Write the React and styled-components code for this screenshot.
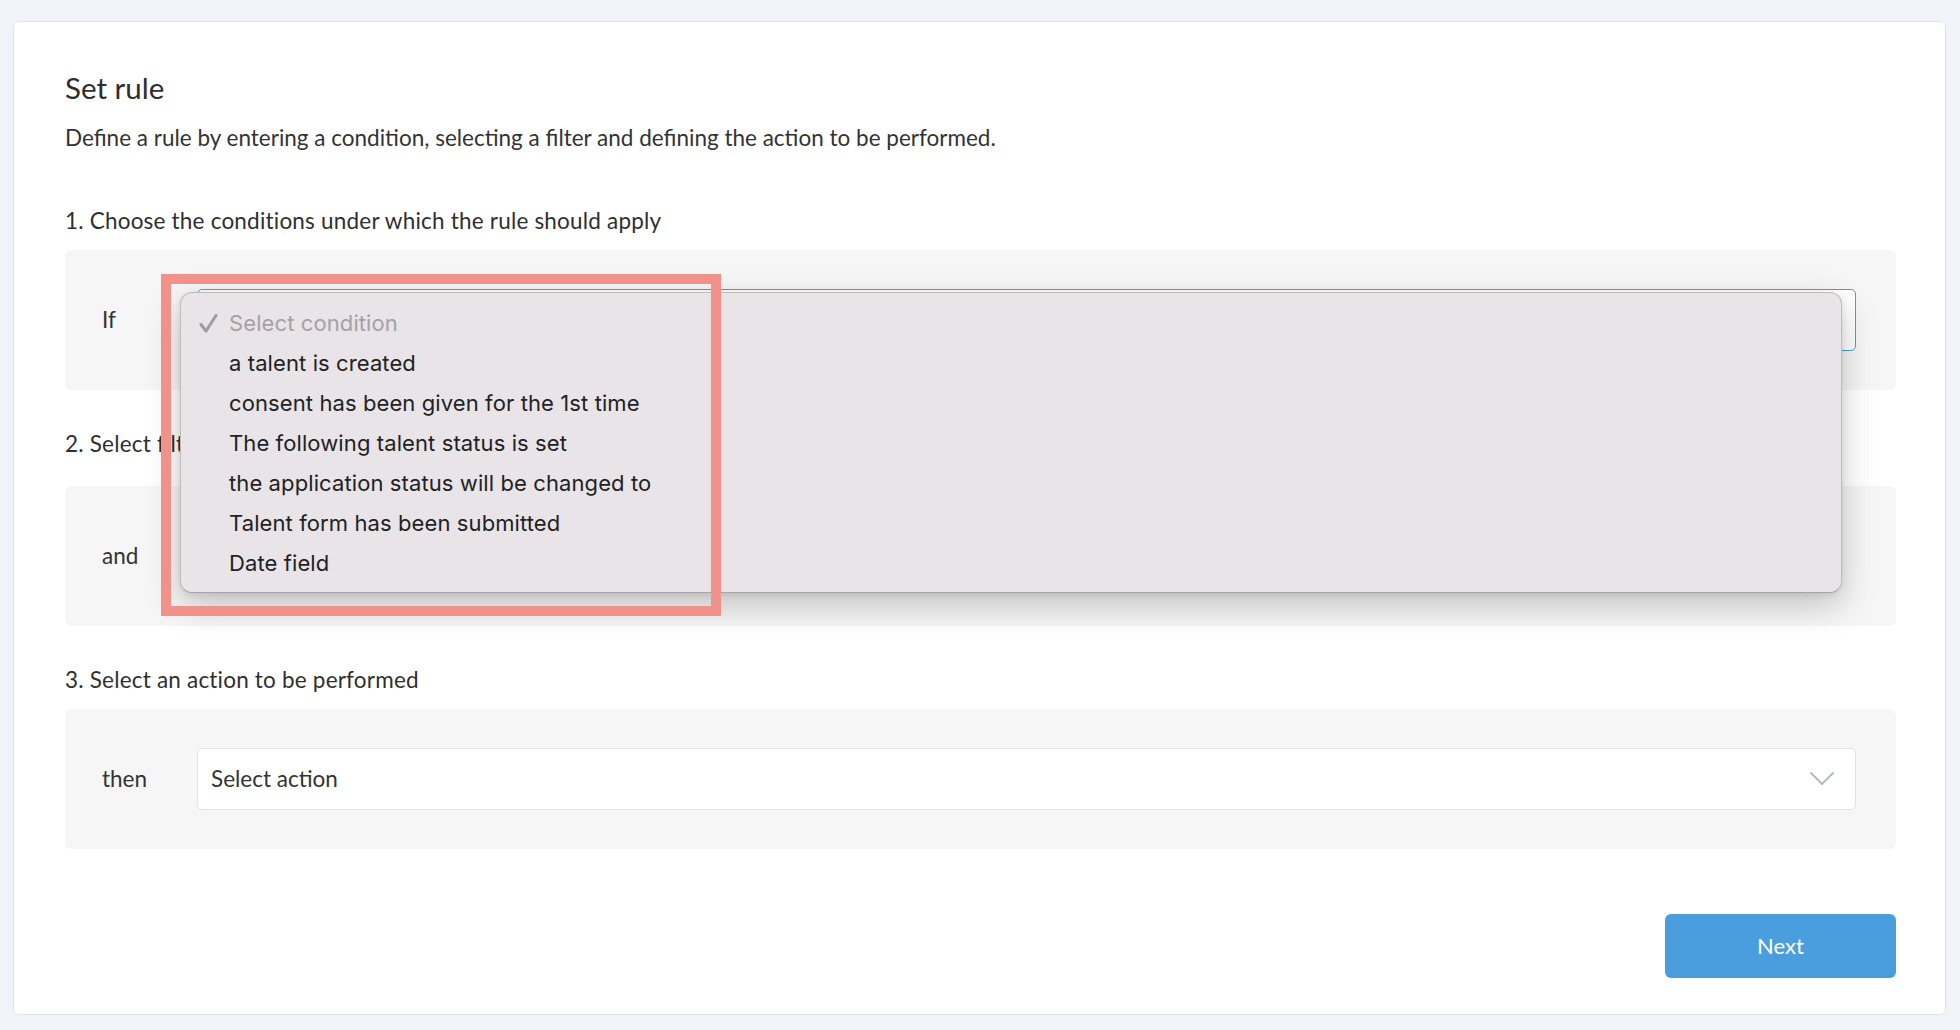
import React from "react"
import styled, { createGlobalStyle } from "styled-components"

const GlobalStyle = createGlobalStyle`
  html, body {
    margin: 0;
    background: #f0f4f9;
  }
  body {
    font-family: Lato, "Liberation Sans", sans-serif;
    color: #333;
  }
  * { box-sizing: border-box; }
`

const Page = styled.div`
  padding: 21px 14px 15px 13px;
`
const Card = styled.div`
  background: #fff;
  border: 1px solid #dfe4eb;
  border-radius: 6px;
  padding: 47.6px 49px 36px 51px;
  display: flex;
  flex-direction: column;
`
const Title = styled.h2`
  margin: 0;
  font-size: 29.5px;
  font-weight: 400;
  line-height: 36px;
  color: #2e2e2e;
`
const Intro = styled.p`
  margin: 18.2px 0 0;
  font-size: 22.5px;
  line-height: 27px;
  color: #333;
`
const StepTitle = styled.h3`
  margin: ${p => p.$top}px 0 ${p => p.$bottom}px;
  font-size: 22.5px;
  font-weight: 400;
  line-height: 27px;
  letter-spacing: 0.2px;
  color: #2f2f2f;
`
const RuleBox = styled.div`
  display: flex;
  align-items: center;
  height: 140px;
  padding: 0 40px 0 37px;
  background: #f6f6f6;
  border-radius: 6px;
`
const RowLabel = styled.span`
  flex: none;
  width: 95px;
  font-size: 22.5px;
  color: #333;
`
const SelectBox = styled.div`
  position: relative;
  flex: 1;
  height: 62px;
  display: flex;
  align-items: center;
  justify-content: space-between;
  padding: 0 20px 0 13px;
  margin-right: ${p => p.$inset || 0}px;
  background: #fff;
  border: 1px solid ${p => (p.$focused ? "#4a9edd" : "#dce2e9")};
  border-radius: 5px;
  font-size: 22.5px;
  color: #333;
`
const Menu = styled.div`
  position: absolute;
  left: -18px;
  right: 13px;
  top: 2px;
  z-index: 5;
  padding: 10px 0 9px;
  background: #e9e4e8;
  border: 1px solid rgba(0, 0, 0, 0.18);
  border-bottom-color: rgba(0, 0, 0, 0.28);
  border-radius: 12px;
  box-shadow: 0 12px 34px rgba(0, 0, 0, 0.22), 0 2px 6px rgba(0, 0, 0, 0.08);
  font-family: Inter, "Noto Sans", sans-serif;
`
const MenuItem = styled.div`
  position: relative;
  height: 40px;
  display: flex;
  align-items: center;
  padding-left: 48px;
  font-size: 22px;
  letter-spacing: 0.1px;
  color: ${p => (p.$muted ? "#a5a1a5" : "#222")};
`
const Tick = styled.svg`
  position: absolute;
  left: 18px;
  top: 11px;
`
const Marker = styled.div`
  position: absolute;
  left: -20px;
  top: -19px;
  width: 560px;
  height: 342px;
  border: 10px solid #f0928a;
  z-index: 6;
  pointer-events: none;
`
const Footer = styled.div`
  display: flex;
  justify-content: flex-end;
  margin-top: 65px;
`
const NextButton = styled.button`
  width: 231px;
  height: 64px;
  border: none;
  border-radius: 6px;
  background: #4a9edd;
  color: #fff;
  font-family: Lato, "Liberation Sans", sans-serif;
  font-size: 22px;
  cursor: pointer;
`

const Chevron = () => (
  <svg width="26" height="15" viewBox="0 0 26 15">
    <polyline points="1.5,1.5 13,13 24.5,1.5" fill="none" stroke="#b3bcc6" strokeWidth="2.2" />
  </svg>
)

const conditions = [
  "a talent is created",
  "consent has been given for the 1st time",
  "The following talent status is set",
  "the application status will be changed to",
  "Talent form has been submitted",
  "Date field",
]

const App = () => (
  <Page>
    <GlobalStyle />
    <Card>
      <Title>Set rule</Title>
      <Intro>
        Define a rule by entering a condition, selecting a filter and defining the action to be performed.
      </Intro>

      <StepTitle $top={56} $bottom={16.2}>1. Choose the conditions under which the rule should apply</StepTitle>
      <RuleBox>
        <RowLabel>If</RowLabel>
        <SelectBox $focused>
          <Menu>
            <MenuItem $muted>
              <Tick width="19" height="19" viewBox="0 0 19 19">
                <path d="M2 10.5 L7 17 L17 1.5" fill="none" stroke="#9f9b9f" strokeWidth="3" strokeLinecap="round" strokeLinejoin="round" />
              </Tick>
              Select condition
            </MenuItem>
            {conditions.map(c => (
              <MenuItem key={c}>{c}</MenuItem>
            ))}
            <Marker />
          </Menu>
        </SelectBox>
      </RuleBox>

      <StepTitle $top={40.5} $bottom={28.5}>2. Select filter (optional)</StepTitle>
      <RuleBox>
        <RowLabel>and</RowLabel>
        <SelectBox $inset={24}>
          Select filter
          <Chevron />
        </SelectBox>
      </RuleBox>

      <StepTitle $top={39.8} $bottom={16.2}>3. Select an action to be performed</StepTitle>
      <RuleBox>
        <RowLabel>then</RowLabel>
        <SelectBox>
          Select action
          <Chevron />
        </SelectBox>
      </RuleBox>

      <Footer>
        <NextButton>Next</NextButton>
      </Footer>
    </Card>
  </Page>
)

export default App
